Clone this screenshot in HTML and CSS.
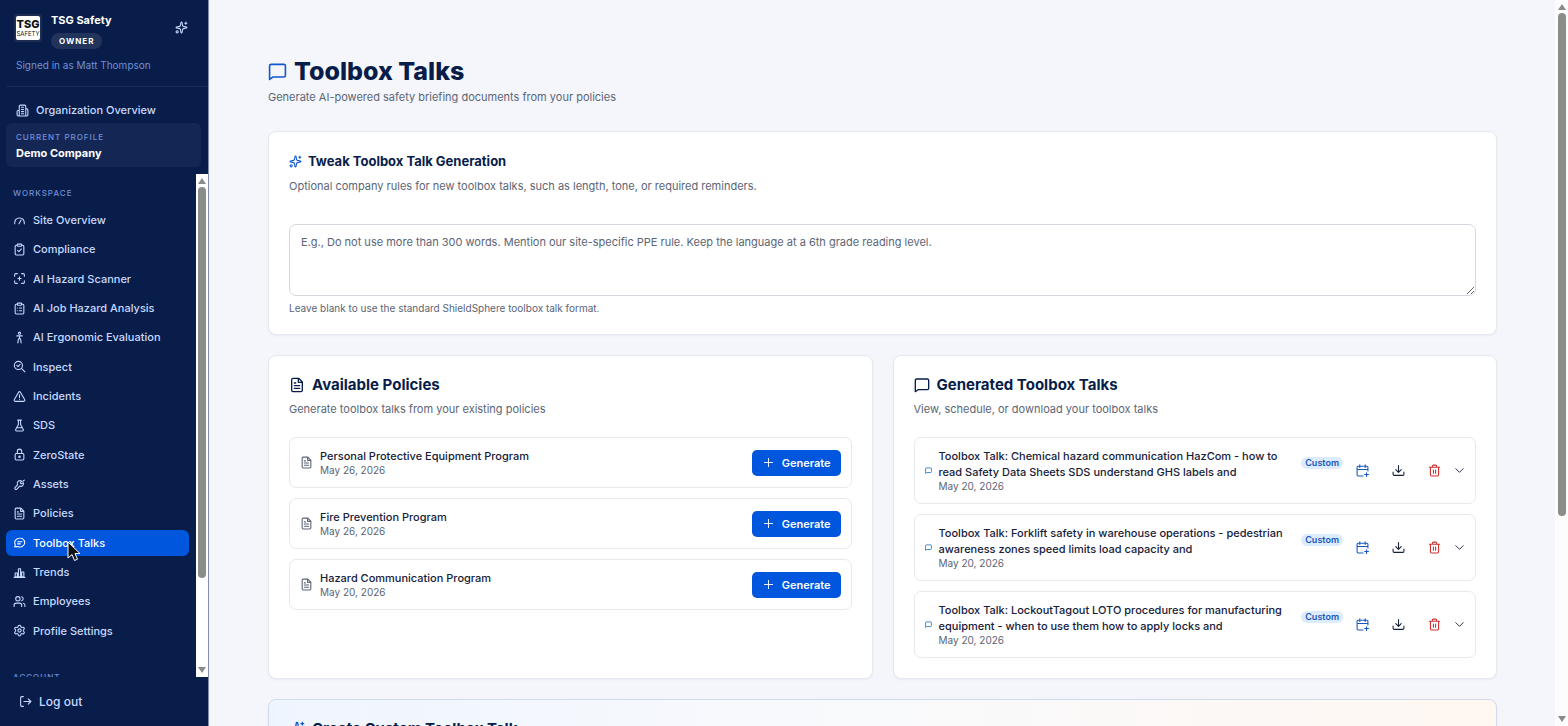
FILE: index.html
```
<!DOCTYPE html>
<html lang="en">

<head>
    <meta charset="UTF-8">
    <meta name="viewport" content="width=device-width, initial-scale=1.0">
    <title>Toolbox Talks - TSG Safety</title>
    <link rel="stylesheet" href="styles.css">
</head>

<body>
    <!-- Icon set -->
    <svg class="sprite" aria-hidden="true">
        <symbol id="i-sparkles" viewBox="0 0 24 24"><path d="M11.017 2.814a1 1 0 0 1 1.966 0l1.051 5.558a2 2 0 0 0 1.594 1.594l5.558 1.051a1 1 0 0 1 0 1.966l-5.558 1.051a2 2 0 0 0-1.594 1.594l-1.051 5.558a1 1 0 0 1-1.966 0l-1.051-5.558a2 2 0 0 0-1.594-1.594l-5.558-1.051a1 1 0 0 1 0-1.966l5.558-1.051a2 2 0 0 0 1.594-1.594zM20 2v4M22 4h-4"/><circle cx="4" cy="20" r="2"/></symbol>
        <symbol id="i-building" viewBox="0 0 24 24"><path d="M6 22V4a2 2 0 0 1 2-2h8a2 2 0 0 1 2 2v18zM6 12H4a2 2 0 0 0-2 2v6a2 2 0 0 0 2 2h2M18 9h2a2 2 0 0 1 2 2v9a2 2 0 0 1-2 2h-2M10 6h4M10 10h4M10 14h4M10 18h4"/></symbol>
        <symbol id="i-gauge" viewBox="0 0 24 24"><path d="M3 18c0-7 4-10.500 9-10.500S21 11 21 18M11 18l4-7"/></symbol>
        <symbol id="i-clip-check" viewBox="0 0 24 24"><rect x="8" y="2" width="8" height="4" rx="1"/><path d="M16 4h2a2 2 0 0 1 2 2v14a2 2 0 0 1-2 2H6a2 2 0 0 1-2-2V6a2 2 0 0 1 2-2h2M8.500 13.500l2.500 2.500 4.500-5"/></symbol>
        <symbol id="i-scan" viewBox="0 0 24 24"><path d="M3 8V5a2 2 0 0 1 2-2h3M16 3h3a2 2 0 0 1 2 2v3M21 16v3a2 2 0 0 1-2 2h-3M8 21H5a2 2 0 0 1-2-2v-3M12 9v6M9 12h6"/></symbol>
        <symbol id="i-clip-list" viewBox="0 0 24 24"><rect x="8" y="2" width="8" height="4" rx="1"/><path d="M16 4h2a2 2 0 0 1 2 2v14a2 2 0 0 1-2 2H6a2 2 0 0 1-2-2V6a2 2 0 0 1 2-2h2M12 11h4M12 16h4M8 11h.01M8 16h.01"/></symbol>
        <symbol id="i-person" viewBox="0 0 24 24"><circle cx="12" cy="4" r="2"/><path d="M7 9h10M12 9v5M9 22l1-7 2-2 2 2 1 7"/></symbol>
        <symbol id="i-inspect" viewBox="0 0 24 24"><circle cx="10" cy="10" r="7.500"/><path d="M22 22l-6.500-6.500M7 10l2.200 2.200L13 8"/></symbol>
        <symbol id="i-alert" viewBox="0 0 24 24"><path d="M10.300 4L2.300 18a2 2 0 0 0 1.700 3h16a2 2 0 0 0 1.700-3l-8-14a2 2 0 0 0-3.400 0zM12 9v5M12 17.500h.01"/></symbol>
        <symbol id="i-flask" viewBox="0 0 24 24"><path d="M8.500 2h7M10 2v8L5 19.500A1.700 1.700 0 0 0 6.500 22h11a1.700 1.700 0 0 0 1.500-2.500L14 10V2M7 16h10"/></symbol>
        <symbol id="i-lock" viewBox="0 0 24 24"><rect x="4" y="10" width="16" height="12" rx="2"/><path d="M8 10V6a4 4 0 0 1 8 0v4"/><circle cx="12" cy="16" r="1.300"/></symbol>
        <symbol id="i-tool" viewBox="0 0 24 24"><path d="M8 11a5 5 0 0 1 8-5l-2.500 3 1.800 1.800L19 8.500a5 5 0 0 1-6.500 6.500L7 20.500a2 2 0 0 1-3-3l4.500-5zM18 6l3-2"/></symbol>
        <symbol id="i-file" viewBox="0 0 24 24"><path d="M14.500 2H6a2 2 0 0 0-2 2v16a2 2 0 0 0 2 2h12a2 2 0 0 0 2-2V7.500zM14 2v6h6M8 9h2M8 13h8M8 17h8"/></symbol>
        <symbol id="i-chat" viewBox="0 0 24 24"><path d="M3 20l1.300-4C1.700 11.800 3.500 7 8 5s10-.8 12.500 3 1 9-3.500 11.200a12 12 0 0 1-9 .3zM8.500 10.500h8M8.500 14.500h5"/></symbol>
        <symbol id="i-chart" viewBox="0 0 24 24"><path d="M2 21h20M4 13h4v7H4zM10 5h4v15h-4zM16 11h4v9h-4z"/></symbol>
        <symbol id="i-users" viewBox="0 0 24 24"><circle cx="9" cy="7" r="4"/><path d="M2 21v-2a4 4 0 0 1 4-4h6a4 4 0 0 1 4 4v2M16 3.200a4 4 0 0 1 0 7.600M22 21v-2a4 4 0 0 0-3-3.800"/></symbol>
        <symbol id="i-settings" viewBox="0 0 24 24"><path d="M9.700 4.100a2.340 2.340 0 0 1 4.600 0 2.340 2.340 0 0 0 3.400 2 2.340 2.340 0 0 1 2.300 4 2.340 2.340 0 0 0 0 3.900 2.340 2.340 0 0 1-2.300 4 2.340 2.340 0 0 0-3.400 2 2.340 2.340 0 0 1-4.600 0 2.340 2.340 0 0 0-3.400-2 2.340 2.340 0 0 1-2.300-4 2.340 2.340 0 0 0 0-3.900 2.340 2.340 0 0 1 2.300-4 2.340 2.340 0 0 0 3.400-2z"/><circle cx="12" cy="12" r="3"/></symbol>
        <symbol id="i-logout" viewBox="0 0 24 24"><path d="M8 3H5a2 2 0 0 0-2 2v14a2 2 0 0 0 2 2h3M9 12h13M17 7l5 5-5 5"/></symbol>
        <symbol id="i-message" viewBox="0 0 24 24"><path d="M22 17a2 2 0 0 1-2 2H6l-4 3V5a2 2 0 0 1 2-2h16a2 2 0 0 1 2 2z"/></symbol>
        <symbol id="i-plus" viewBox="0 0 24 24"><path d="M3 12h18M12 3v18"/></symbol>
        <symbol id="i-calendar" viewBox="0 0 24 24"><path d="M7 1.500v5M17 1.500v5M2 10h20M22 13V6a2 2 0 0 0-2-2H4a2 2 0 0 0-2 2v14a2 2 0 0 0 2 2h9M19.500 16v7M16 19.500h7"/></symbol>
        <symbol id="i-download" viewBox="0 0 24 24"><path d="M12 3v12M7 10.500l5 5 5-5M2 15v4a2 2 0 0 0 2 2h16a2 2 0 0 0 2-2v-4"/></symbol>
        <symbol id="i-trash" viewBox="0 0 24 24"><path d="M2.500 6h19M19.500 6v14a2 2 0 0 1-2 2h-11a2 2 0 0 1-2-2V6M8 6V4a2 2 0 0 1 2-2h4a2 2 0 0 1 2 2v2M10 11v6M14 11v6"/></symbol>
        <symbol id="i-chevron" viewBox="0 0 24 24"><path d="M4 8l8 8 8-8"/></symbol>
    </svg>

    <div class="app">
        <aside class="sidebar">
            <header class="brand">
                <div class="brand-row">
                    <div class="logo"><span>TSG</span><small>SAFETY</small></div>
                    <div class="brand-name">
                        <strong>TSG Safety</strong>
                        <span class="role">OWNER</span>
                    </div>
                    <button class="assist" aria-label="Assistant"><svg class="icon"><use href="#i-sparkles"/></svg></button>
                </div>
                <p class="signed-in">Signed in as Matt Thompson</p>
            </header>

            <a class="org-link" href="#"><svg class="icon"><use href="#i-building"/></svg>Organization Overview</a>
            <div class="profile">
                <span class="label">CURRENT PROFILE</span>
                <strong>Demo Company</strong>
            </div>

            <div class="nav-scroll">
                <nav class="nav">
                    <h2 class="label">WORKSPACE</h2>
                    <ul class="nav-list">
                        <li><a href="#"><svg class="icon"><use href="#i-gauge"/></svg>Site Overview</a></li>
                        <li><a href="#"><svg class="icon"><use href="#i-clip-check"/></svg>Compliance</a></li>
                        <li><a href="#"><svg class="icon"><use href="#i-scan"/></svg>AI Hazard Scanner</a></li>
                        <li><a href="#"><svg class="icon"><use href="#i-clip-list"/></svg>AI Job Hazard Analysis</a></li>
                        <li><a href="#"><svg class="icon"><use href="#i-person"/></svg>AI Ergonomic Evaluation</a></li>
                        <li><a href="#"><svg class="icon"><use href="#i-inspect"/></svg>Inspect</a></li>
                        <li><a href="#"><svg class="icon"><use href="#i-alert"/></svg>Incidents</a></li>
                        <li><a href="#"><svg class="icon"><use href="#i-flask"/></svg>SDS</a></li>
                        <li><a href="#"><svg class="icon"><use href="#i-lock"/></svg>ZeroState</a></li>
                        <li><a href="#"><svg class="icon"><use href="#i-tool"/></svg>Assets</a></li>
                        <li><a href="#"><svg class="icon"><use href="#i-file"/></svg>Policies</a></li>
                        <li>
                            <a class="active" href="#"><svg class="icon"><use href="#i-chat"/></svg>Toolbox Talks</a>
                            <svg class="pointer" viewBox="0 0 14 21" aria-hidden="true"><path d="M1 1v16l4-3.500 2.500 6 3-1.300L8 12.500h5z"/></svg>
                        </li>
                        <li><a href="#"><svg class="icon"><use href="#i-chart"/></svg>Trends</a></li>
                        <li><a href="#"><svg class="icon"><use href="#i-users"/></svg>Employees</a></li>
                        <li><a href="#"><svg class="icon"><use href="#i-settings"/></svg>Profile Settings</a></li>
                    </ul>
                    <h2 class="label">ACCOUNT</h2>
                </nav>
                <div class="rail" aria-hidden="true">
                    <i class="arrow up"></i><i class="thumb"></i><i class="arrow down"></i>
                </div>
            </div>

            <button class="logout"><svg class="icon"><use href="#i-logout"/></svg>Log out</button>
        </aside>

        <main class="content">
            <header class="page-head">
                <h1><svg class="icon"><use href="#i-message"/></svg>Toolbox Talks</h1>
                <p>Generate AI-powered safety briefing documents from your policies</p>
            </header>

            <section class="card tweak">
                <h2><svg class="icon"><use href="#i-sparkles"/></svg><label for="rules">Tweak Toolbox Talk Generation</label></h2>
                <p>Optional company rules for new toolbox talks, such as length, tone, or required reminders.</p>
                <textarea id="rules" placeholder="E.g., Do not use more than 300 words. Mention our site-specific PPE rule. Keep the language at a 6th grade reading level."></textarea>
                <small>Leave blank to use the standard ShieldSphere toolbox talk format.</small>
            </section>

            <div class="columns">
                <section class="card">
                    <h2><svg class="icon"><use href="#i-file"/></svg>Available Policies</h2>
                    <p>Generate toolbox talks from your existing policies</p>
                    <ul class="rows">
                        <li class="row policy">
                            <svg class="icon"><use href="#i-file"/></svg>
                            <div class="row-text"><h3>Personal Protective Equipment Program</h3><time>May 26, 2026</time></div>
                            <button class="generate"><svg class="icon"><use href="#i-plus"/></svg>Generate</button>
                        </li>
                        <li class="row policy">
                            <svg class="icon"><use href="#i-file"/></svg>
                            <div class="row-text"><h3>Fire Prevention Program</h3><time>May 26, 2026</time></div>
                            <button class="generate"><svg class="icon"><use href="#i-plus"/></svg>Generate</button>
                        </li>
                        <li class="row policy">
                            <svg class="icon"><use href="#i-file"/></svg>
                            <div class="row-text"><h3>Hazard Communication Program</h3><time>May 20, 2026</time></div>
                            <button class="generate"><svg class="icon"><use href="#i-plus"/></svg>Generate</button>
                        </li>
                    </ul>
                </section>

                <section class="card">
                    <h2><svg class="icon"><use href="#i-message"/></svg>Generated Toolbox Talks</h2>
                    <p>View, schedule, or download your toolbox talks</p>
                    <ul class="rows">
                        <li class="row talk">
                            <svg class="icon"><use href="#i-message"/></svg>
                            <div class="row-text"><h3>Toolbox Talk: Chemical hazard communication HazCom - how to read Safety Data Sheets SDS understand GHS labels and</h3><time>May 20, 2026</time></div>
                            <span class="badge">Custom</span>
                            <div class="actions">
                                <button class="blue" aria-label="Schedule"><svg class="icon"><use href="#i-calendar"/></svg></button>
                                <button aria-label="Download"><svg class="icon"><use href="#i-download"/></svg></button>
                                <button class="red" aria-label="Delete"><svg class="icon"><use href="#i-trash"/></svg></button>
                                <button class="expand" aria-label="Expand"><svg class="icon"><use href="#i-chevron"/></svg></button>
                            </div>
                        </li>
                        <li class="row talk">
                            <svg class="icon"><use href="#i-message"/></svg>
                            <div class="row-text"><h3>Toolbox Talk: Forklift safety in warehouse operations - pedestrian awareness zones speed limits load capacity and</h3><time>May 20, 2026</time></div>
                            <span class="badge">Custom</span>
                            <div class="actions">
                                <button class="blue" aria-label="Schedule"><svg class="icon"><use href="#i-calendar"/></svg></button>
                                <button aria-label="Download"><svg class="icon"><use href="#i-download"/></svg></button>
                                <button class="red" aria-label="Delete"><svg class="icon"><use href="#i-trash"/></svg></button>
                                <button class="expand" aria-label="Expand"><svg class="icon"><use href="#i-chevron"/></svg></button>
                            </div>
                        </li>
                        <li class="row talk">
                            <svg class="icon"><use href="#i-message"/></svg>
                            <div class="row-text"><h3>Toolbox Talk: LockoutTagout LOTO procedures for manufacturing equipment - when to use them how to apply locks and</h3><time>May 20, 2026</time></div>
                            <span class="badge">Custom</span>
                            <div class="actions">
                                <button class="blue" aria-label="Schedule"><svg class="icon"><use href="#i-calendar"/></svg></button>
                                <button aria-label="Download"><svg class="icon"><use href="#i-download"/></svg></button>
                                <button class="red" aria-label="Delete"><svg class="icon"><use href="#i-trash"/></svg></button>
                                <button class="expand" aria-label="Expand"><svg class="icon"><use href="#i-chevron"/></svg></button>
                            </div>
                        </li>
                    </ul>
                </section>
            </div>

            <section class="card create">
                <h2><svg class="icon"><use href="#i-sparkles"/></svg>Create Custom Toolbox Talk</h2>
            </section>
        </main>

        <div class="rail page-rail" aria-hidden="true">
            <i class="arrow up"></i><i class="thumb"></i><i class="arrow down"></i>
        </div>
    </div>
</body>

</html>
```
FILE: styles.css
```
* {
    box-sizing: border-box;
}

body {
    margin: 0;
    font-family: Inter, "Liberation Sans", sans-serif;
    font-size: 11px;
    line-height: 16px;
    color: #16213a;
    background: #f4f6fb;
}

h1, h2, h3, p, ul {
    margin: 0;
    padding: 0;
}

ul {
    list-style: none;
}

a {
    color: inherit;
    text-decoration: none;
}

button {
    font: inherit;
    color: inherit;
    background: none;
    border: none;
    padding: 0;
    cursor: pointer;
}

.sprite {
    display: none;
}

.icon {
    width: 13px;
    height: 13px;
    flex: none;
    fill: none;
    stroke: currentColor;
    stroke-width: 2;
    stroke-linecap: round;
    stroke-linejoin: round;
}

.app {
    display: flex;
    height: 100vh;
    overflow: hidden;
}

/* Sidebar */
.sidebar {
    display: flex;
    flex-direction: column;
    flex: none;
    width: 209px;
    color: #c9d9ff;
    background: #081d49;
    border-right: 1px solid #8490b0;
}

.brand {
    margin-left: 6px;
    padding: 12px 20px 13px 10px;
    border-bottom: 1px solid #172b58;
}

.brand-row {
    display: flex;
    align-items: flex-start;
    gap: 11px;
}

.logo {
    display: flex;
    flex-direction: column;
    align-items: center;
    justify-content: center;
    width: 24px;
    height: 24px;
    margin-top: 4px;
    color: #111;
    background: #fff;
    border-radius: 2px;
    box-shadow: 0 0 0 2px #1d2c50;
}

.logo span {
    font-size: 11px;
    line-height: 11px;
    font-weight: 800;
}

.logo small {
    font-size: 6px;
    line-height: 7px;
}

.brand-name {
    flex: 1;
    display: flex;
    flex-direction: column;
    align-items: flex-start;
    gap: 5px;
    color: #fff;
}

.role {
    padding: 0 8px;
    font-size: 8px;
    font-weight: 700;
    letter-spacing: 1px;
    border-radius: 8px;
    background: #22335c;
}

.assist {
    margin-top: 9px;
    height: 13px;
    line-height: 13px;
}

.signed-in {
    margin-top: 8px;
    font-size: 10px;
    color: #7390d8;
}

.org-link {
    display: flex;
    align-items: center;
    gap: 7px;
    padding: 15px 16px 5px;
    font-weight: 500;
}

.profile {
    display: flex;
    flex-direction: column;
    margin: 0 7px 7px 6px;
    padding: 6px 10px;
    border-radius: 6px;
    background: #142754;
    color: #fff;
}

.label {
    font-size: 8px;
    font-weight: 500;
    letter-spacing: 1px;
    color: #7390d8;
}

.nav-scroll {
    display: flex;
    flex: 1;
    min-height: 0;
}

.nav {
    flex: 1;
    overflow: hidden;
    padding: 11px 7px 0 6px;
}

.nav .label {
    padding-left: 7px;
}

.nav-list {
    display: flex;
    flex-direction: column;
    justify-content: space-between;
    height: 437px;
    margin: 6px 0 25px;
}

.nav-list li {
    position: relative;
}

.nav-list a {
    display: flex;
    align-items: center;
    gap: 7px;
    height: 26px;
    padding: 0 7px;
    font-weight: 500;
    border-radius: 6px;
}

.nav-list .active {
    color: #fff;
    background: #0056dc;
}

.pointer {
    position: absolute;
    left: 61px;
    top: 11px;
    width: 14px;
    height: 21px;
    fill: #111;
    stroke: #fff;
    stroke-width: 1;
}

.logout {
    display: flex;
    align-items: center;
    gap: 7px;
    height: 49px;
    padding: 0 19px;
    font-size: 12px;
    font-weight: 500;
}

/* Scroll rails */
.rail {
    display: flex;
    flex-direction: column;
    align-items: center;
    gap: 3px;
    flex: none;
    width: 12px;
    padding: 4px 0;
    background: #fff;
}

.arrow {
    border: 4px solid transparent;
}

.arrow.up {
    border-top: 0;
    border-bottom: 6px solid #8a8a8a;
}

.arrow.down {
    margin-top: auto;
    border-bottom: 0;
    border-top: 6px solid #8a8a8a;
}

.thumb {
    width: 8px;
    height: 79%;
    border-radius: 4px;
    background: #8b8d8a;
}

.page-rail {
    width: 13px;
    background: #fcfcfd;
}

.page-rail .thumb {
    height: 70%;
}

/* Page */
.content {
    flex: 1;
    min-width: 0;
    overflow: hidden;
    display: flex;
    flex-direction: column;
    gap: 20px;
    padding: 56px 58px 0 59px;
}

.content > * {
    flex: none;
}

.content p {
    color: #5b6576;
}

.content h1,
.content h2 {
    display: flex;
    align-items: center;
    color: #081d49;
    font-weight: 700;
}

.page-head {
    margin-bottom: 6px;
}

.page-head h1 {
    gap: 7px;
    font-size: 25px;
    line-height: 30px;
    font-weight: 800;
}

.page-head h1 .icon {
    width: 19px;
    height: 19px;
    color: #0f57d0;
}

.page-head p {
    margin-top: 3px;
}

.card {
    padding: 20px;
    background: #fff;
    border: 1px solid #e5e8ee;
    border-radius: 8px;
    box-shadow: 0 1px 2px #e8ebf2;
}

.card h2 {
    gap: 7px;
    font-size: 15px;
    line-height: 18px;
}

.card h2 .icon {
    width: 16px;
    height: 16px;
}

.card h2 + p {
    margin-top: 7px;
}

.card.tweak {
    padding-bottom: 18px;
}

.tweak h2 {
    gap: 6px;
    font-size: 13px;
}

.card.tweak h2 .icon {
    width: 13px;
    height: 13px;
    color: #0f57d0;
}

.card.tweak h2 + p {
    margin-top: 8px;
}

.tweak textarea {
    display: block;
    width: 100%;
    height: 72px;
    margin: 30px 0 4px;
    padding: 9px 11px;
    font: inherit;
    border: 1px solid #d5d9df;
    border-radius: 7px;
    background: #fff;
    resize: vertical;
}

.tweak textarea::placeholder {
    color: #5b6576;
}

.tweak small {
    display: block;
    font-size: 10px;
    color: #5b6576;
}

.columns {
    display: grid;
    grid-template-columns: 1fr 1fr;
    gap: 20px;
}

.rows {
    display: flex;
    flex-direction: column;
    gap: 10px;
    margin-top: 20px;
}

.row {
    display: flex;
    align-items: center;
    gap: 7px;
    padding: 10px;
    border: 1px solid #e6e9ee;
    border-radius: 7px;
}

.row-text {
    flex: 1;
}

.row h3 {
    font-size: 11px;
    font-weight: 500;
}

.row time {
    display: block;
    font-size: 10px;
    line-height: 13px;
    color: #5b6576;
}

.policy > .icon {
    color: #5b6576;
}

.generate {
    display: flex;
    align-items: center;
    gap: 8px;
    height: 26px;
    padding: 0 10px 0 11px;
    color: #fff;
    font-weight: 600;
    background: #0056dc;
    border-radius: 5px;
}

.generate .icon {
    width: 11px;
    height: 11px;
}

.talk > .icon {
    width: 7px;
    height: 7px;
    stroke-width: 3;
    color: #2f7bc4;
}

.badge {
    align-self: flex-start;
    margin-top: 9px;
    padding: 0 4px;
    font-size: 9px;
    line-height: 12px;
    font-weight: 600;
    color: #1857b8;
    background: #dcebfd;
    border-radius: 6px;
}

.actions {
    display: flex;
    gap: 12px;
}

.actions button {
    display: flex;
    align-items: center;
    justify-content: center;
    width: 24px;
    height: 24px;
}

.actions .blue {
    color: #1757c2;
}

.actions .red {
    color: #cf3030;
}

.actions .expand {
    width: 11px;
    margin-left: -4px;
}

.actions .expand .icon {
    width: 11px;
    height: 11px;
}

.create {
    background: linear-gradient(to right, #eff5ff, #f9fafc 50%, #fff7f1);
    border-color: #d0dced;
}

.create h2 .icon {
    color: #0f57d0;
}
```
